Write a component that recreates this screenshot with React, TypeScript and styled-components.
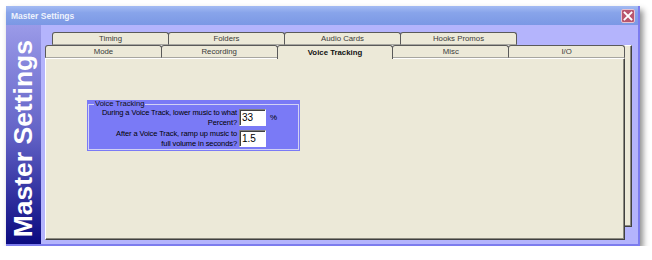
import styled, { createGlobalStyle } from 'styled-components'

const GlobalStyle = createGlobalStyle`
  html, body {
    margin: 0;
    background: #ffffff;
  }
  body {
    font-family: "Liberation Sans", Arial, sans-serif;
  }
`

const backTabs = ['Timing', 'Folders', 'Audio Cards', 'Hooks Promos']
const frontTabs = ['Mode', 'Recording', 'Voice Tracking', 'Misc', 'I/O']
const selectedTab = 'Voice Tracking'

export default function App() {
  return (
    <>
      <GlobalStyle />
      <Window>
        <TitleBar>
          <Title>Master Settings</Title>
          <CloseButton aria-label="Close">
            <svg width="10" height="10" viewBox="0 0 10 10">
              <path d="M1.5 1.5 L8.5 8.5 M8.5 1.5 L1.5 8.5" stroke="#ffffff" strokeWidth="1.8" strokeLinecap="square" />
            </svg>
          </CloseButton>
        </TitleBar>
        <Body>
          <Sidebar>
            <SideTitle>Master Settings</SideTitle>
          </Sidebar>
          <Content>
            <TabStack>
              <BackSheet>
                <TabRow>
                  {backTabs.map(t => (
                    <Tab key={t}>{t}</Tab>
                  ))}
                </TabRow>
                <Panel />
              </BackSheet>
              <FrontSheet>
                <TabRow>
                  {frontTabs.map(t => (
                    <Tab key={t} $selected={t === selectedTab}>{t}</Tab>
                  ))}
                </TabRow>
                <Panel>
                  <GroupBox>
                    <Fieldset>
                      <Legend>Voice Tracking</Legend>
                      <FormGrid>
                        <Label>During a Voice Track, lower music to what<br />Percent?</Label>
                        <Field readOnly value="33" />
                        <Unit>%</Unit>
                        <Label>After a Voice Track, ramp up music to<br />full volume in seconds?</Label>
                        <Field readOnly value="1.5" />
                        <Unit />
                      </FormGrid>
                    </Fieldset>
                  </GroupBox>
                </Panel>
              </FrontSheet>
            </TabStack>
          </Content>
        </Body>
      </Window>
    </>
  )
}

const Window = styled.div`
  margin: 6px 0 0 6px;
  width: 634px;
  height: 240px;
  box-sizing: border-box;
  display: flex;
  flex-direction: column;
  background: #b4b4fc;
  border-right: 2px solid #7c7cee;
  border-bottom: 2px solid #7c7cee;
  box-shadow: 3px 4px 6px rgba(0, 0, 0, 0.45);
`
const TitleBar = styled.div`
  height: 19px;
  flex: none;
  display: flex;
  align-items: center;
  justify-content: space-between;
  padding: 0 3px 0 5px;
  background: linear-gradient(#a4bbf3, #88a4ea 35%, #7b98e4);
`
const Title = styled.span`
  font-size: 8.5px;
  font-weight: bold;
  color: #eef2fc;
`
const CloseButton = styled.div`
  width: 14px;
  height: 14px;
  box-sizing: border-box;
  display: flex;
  align-items: center;
  justify-content: center;
  background: #b9566e;
  border: 1px solid #e6c4d2;
  border-radius: 2px;
`
const Body = styled.div`
  flex: 1;
  display: flex;
  min-height: 0;
`
const Sidebar = styled.div`
  width: 35px;
  flex: none;
  display: flex;
  flex-direction: column;
  justify-content: flex-end;
  align-items: center;
  padding-bottom: 7px;
  box-sizing: border-box;
  background: linear-gradient(#9a9ae8, #6262c6 50%, #0a0a80);
`
const SideTitle = styled.span`
  writing-mode: vertical-rl;
  transform: rotate(180deg);
  font-family: "Liberation Sans", Arial, sans-serif;
  font-size: 26.5px;
  font-weight: bold;
  line-height: 1;
  color: #ffffff;
  white-space: nowrap;
`
const Content = styled.div`
  flex: 1;
  display: flex;
  padding: 7px 6px 4px 4px;
`
const TabStack = styled.div`
  flex: 1;
  display: grid;
  grid-template-columns: 1fr;
  grid-template-rows: 1fr;
`
const BackSheet = styled.div`
  grid-area: 1 / 1;
  margin: 0 0 13px 7px;
  display: flex;
  flex-direction: column;
`
const FrontSheet = styled.div`
  grid-area: 1 / 1;
  margin: 13px 7px 0 0;
  display: flex;
  flex-direction: column;
`
const TabRow = styled.div`
  height: 13px;
  flex: none;
  display: flex;
  align-items: flex-start;
`
const Tab = styled.div<{ $selected?: boolean }>`
  flex: 0 1 117px;
  height: ${p => (p.$selected ? '14px' : '13px')};
  margin-bottom: ${p => (p.$selected ? '-1px' : '0')};
  position: relative;
  z-index: ${p => (p.$selected ? 1 : 0)};
  box-sizing: border-box;
  display: flex;
  align-items: center;
  justify-content: center;
  background: #ece9d8;
  border: 1px solid #5a5a5a;
  border-bottom: ${p => (p.$selected ? 'none' : '1px solid #a7a6a0')};
  border-radius: 3px 3px 0 0;
  font-size: 7.8px;
  font-weight: ${p => (p.$selected ? 'bold' : 'normal')};
  color: ${p => (p.$selected ? '#111111' : '#3a3a3a')};
  white-space: nowrap;
  & + & {
    margin-left: -1px;
  }
`
const Panel = styled.div`
  flex: 1;
  box-sizing: border-box;
  padding: 41px 0 0 41px;
  background: #ece9d8;
  border-style: solid;
  border-width: 1px;
  border-color: #ffffff #404040 #404040 #ffffff;
  box-shadow: inset -1px -1px 0 #8c8a80;
`
const GroupBox = styled.div`
  width: 213px;
  box-sizing: border-box;
  padding: 0 1px 1px 1px;
  background: #7a7af6;
`
const Fieldset = styled.fieldset`
  margin: 0;
  padding: 0 4px 1px 3px;
  border: 1px solid #d2d2f4;
  min-width: 0;
`
const Legend = styled.legend`
  padding: 0 1px;
  margin-left: 2px;
  font-size: 7.6px;
  line-height: 8px;
  color: #101010;
`
const FormGrid = styled.div`
  display: grid;
  grid-template-columns: 145px 27px auto;
  column-gap: 2px;
  row-gap: 2px;
  align-items: center;
`
const Label = styled.div`
  text-align: right;
  font-size: 7.5px;
  line-height: 9.5px;
  color: #000000;
  white-space: nowrap;
  letter-spacing: -0.1px;
`
const Field = styled.input`
  width: 27px;
  height: 17px;
  box-sizing: border-box;
  margin: 0;
  padding: 0 2px;
  background: #ffffff;
  border: 1px solid;
  border-color: #808080 #ffffff #ffffff #808080;
  box-shadow: inset 1px 1px 0 #404040;
  font-family: "Liberation Sans", Arial, sans-serif;
  font-size: 10px;
  color: #000000;
  outline: none;
`
const Unit = styled.span`
  margin-left: 2px;
  font-size: 8px;
  color: #000000;
`
